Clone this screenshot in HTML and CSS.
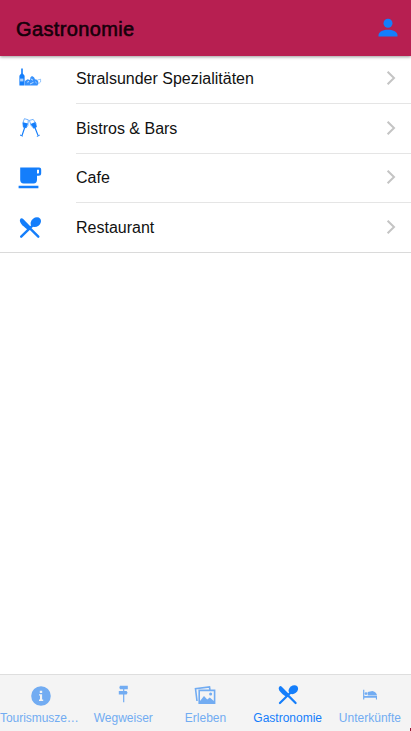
FILE: index.html
```html
<!DOCTYPE html>
<html lang="de">
<head>
<meta charset="utf-8">
<title>Gastronomie</title>
<link rel="stylesheet" href="styles.css">
</head>
<body>
<svg class="defs" width="0" height="0">
  <symbol id="cutlery" viewBox="0 0 24 24">
    <path d="M6.9 11.6 10 14 13 10.9 5.2 3Q3.9 1.8 2.7 2.6C.4 5.1 3.2 8.5 6.9 11.6Z"/>
    <ellipse cx="17.8" cy="6.2" rx="5.6" ry="4.4" transform="rotate(-38 17.8 6.2)"/>
    <path d="M15.5 8.7 3.2 20.7M12 12.4 20.3 20.7" fill="none" stroke="currentColor" stroke-width="2.4" stroke-linecap="round"/>
  </symbol>
  <symbol id="chevron" viewBox="0 0 10 16">
    <path d="M1.6 1.8 8 8 1.6 14.2" fill="none" stroke="#c4c4c4" stroke-width="2"/>
  </symbol>
</svg>
<div class="app">
  <header class="toolbar">
    <h1 class="title">Gastronomie</h1>
    <svg class="person" viewBox="0 0 20 20"><circle cx="10" cy="5.2" r="4.5"/><path d="M.5 18.6V17C.8 13.5 5.6 11.8 10 11.8S19.2 13.5 19.5 17V18.6Z"/></svg>
  </header>
  <main class="content">
    <ul class="list">
      <li class="row">
        <svg class="icon" viewBox="0 0 24 24"><path d="M3.2 2.6H4.8V7.5L6.6 9.7V19.5H1.4V9.7L3.2 7.5Z"/><path d="M7 15 9.5 13.2 12 14 12.5 11.2 14 10 16 11.3 17 13.2 19 13.8 20.5 16 19.5 19.5H7Z" opacity=".85"/><path d="M2.1 12.6H5.4V15.4H2.1Z" fill="#a9cffc"/><path d="M9.2 16.2 11 15.5M13 13 15 14.2M12 18 15.5 16.3M17.3 15.8 18.6 17" fill="none" stroke="#fff" stroke-width=".7"/><path d="M19.5 14 22.6 13.2V16L19.5 18.5" fill="none" stroke="currentColor" stroke-width=".6" opacity=".7"/></svg>
        <div class="item"><span>Stralsunder Spezialitäten</span><svg class="chevron"><use href="#chevron"/></svg></div>
      </li>
      <li class="row">
        <svg class="icon" viewBox="0 0 24 24"><path d="M6.4 1.7 10.3 2.8 9.9 8.5 8.2 10.8 5.4 10.2 4.7 6.4ZM11.4 3.4 15.2 2.4 18 6.5 18.4 10 15.7 11.1 13.3 9Z" fill="#fff" stroke="currentColor" stroke-width=".6"/><path d="M4.9 5.2 10 6.4 8.2 11 5.2 10.3ZM12.6 6.9 17.4 5 18.6 10.1 15.8 11.4Z"/><path d="M6.7 10.5 4 18.6M17 10.8 20 18.4" fill="none" stroke="currentColor" stroke-width="1.2"/><path d="M2 18 4.8 19.2M18.9 19.4 21.7 18.2" fill="none" stroke="currentColor" stroke-width="1"/></svg>
        <div class="item"><span>Bistros &amp; Bars</span><svg class="chevron"><use href="#chevron"/></svg></div>
      </li>
      <li class="row">
        <svg class="icon" viewBox="0 0 24 24"><path fill-rule="evenodd" d="M2.2 1.4H21.2Q23.2 1.4 23.2 3.4V7.3Q23.2 9.8 20.7 9.8H19V13.8Q19 17.4 15.6 17.4H5.7Q2.2 17.4 2.2 13.8ZM19 3.7V7.5H20.3Q21 7.5 21 6.8V3.7ZM.6 19.8H20.4V22.2H.6Z"/></svg>
        <div class="item"><span>Cafe</span><svg class="chevron"><use href="#chevron"/></svg></div>
      </li>
      <li class="row">
        <svg class="icon"><use href="#cutlery"/></svg>
        <div class="item"><span>Restaurant</span><svg class="chevron"><use href="#chevron"/></svg></div>
      </li>
    </ul>
  </main>
  <nav class="tabs">
    <div class="tab"><svg class="tab-icon" viewBox="0 0 22 22"><path fill-rule="evenodd" d="M11 1.2A9.8 9.8 0 1 0 11 20.8A9.8 9.8 0 1 0 11 1.2ZM9.8 5.7H12.2V8H9.8ZM9 9.3H12.1V14.6H13.2V16H9V14.6H10V10.6H9Z"/></svg><span class="label first">Tourismusze…</span></div>
    <div class="tab"><svg class="tab-icon" viewBox="0 0 22 22"><path d="M8 .8H15.8V4.2H8L7.3 2.5ZM6.8 6H14.6L15.6 7.7L14.6 9.4H6.8ZM11.1 4H12.3V17.2H11.1Z"/></svg><span class="label">Wegweiser</span></div>
    <div class="tab"><svg class="tab-icon" viewBox="0 0 22 22"><path d="M3 16 1.5 3.8 15.5 2 16 5" fill="none" stroke="currentColor" stroke-width="1.6"/><path fill-rule="evenodd" d="M4.4 4.6H21.4V19H4.4ZM6 6.2V16L10 11 13.2 14.5 15.8 12.5 19.8 16V6.2Z"/><circle cx="16.6" cy="9" r="1.5"/></svg><span class="label">Erleben</span></div>
    <div class="tab active"><svg class="tab-icon cutlery"><use href="#cutlery"/></svg><span class="label">Gastronomie</span></div>
    <div class="tab"><svg class="tab-icon" viewBox="0 0 22 22"><path d="M4.1 4.8H5.3V11H18V14.4H16.9V12.8H5.3V14.4H4.1ZM8.7 10.4V7L13.5 5.9Q17.7 7 18 10.4Z"/><circle cx="7" cy="8.6" r="1.4"/></svg><span class="label">Unterkünfte</span></div>
  </nav>
  <i class="corner"></i>
</div>
</body>
</html>
```

FILE: styles.css
```css
* { box-sizing: border-box; }
body { margin: 0; font-family: "Liberation Sans", Arial, sans-serif; color: #111; }
svg { display: block; fill: currentColor; flex: none; }
.defs { position: absolute; }
.app { position: relative; height: 731px; overflow: hidden; display: flex; flex-direction: column; background: #fff; }
.toolbar {
  height: 56px; flex: none; display: flex; align-items: center; justify-content: space-between;
  padding: 2px 13px 0 16px; background: #b71f51; box-shadow: 0 1px 3px rgba(0,0,0,.4); z-index: 1;
}
.title { margin: 0; font-size: 20px; line-height: 24px; font-weight: 400; color: #16000a; -webkit-text-stroke: .6px #16000a; letter-spacing: .37px; }
.person { width: 20px; height: 20px; color: #147efb; margin-top: -2px; }
.content { flex: 1; }
.list { list-style: none; margin: 0; padding: 0; border-bottom: 1px solid #dadada; }
.row { display: flex; align-items: center; height: 49.5px; padding-left: 18px; color: #147efb; }
.row:first-child { height: 48px; }
.row:last-child { height: 49px; }
.icon { width: 24px; height: 24px; margin-right: 34px; }
.row:first-child .icon { margin-top: -5px; }
.item {
  flex: 1; height: 100%; display: flex; align-items: center; justify-content: space-between;
  padding-right: 15px; border-bottom: 1px solid #e5e5e5; font-size: 16px; color: #111;
}
.row:first-child .item { padding-bottom: 2px; }
.row:nth-child(2) .item { padding-top: 1px; }
.row:last-child .item { border: 0; }
.chevron { width: 10px; height: 16px; margin-top: -2px; }
.tabs { height: 57px; flex: none; display: grid; grid-template-columns: repeat(5, 1fr); background: #f4f4f4; border-top: 1px solid #dedede; }
.tab { min-width: 0; display: flex; flex-direction: column; align-items: center; padding-top: 10px; color: #72acf2; }
.tab.active { color: #147efb; }
.tab-icon { width: 22px; height: 22px; }
.cutlery { margin-top: -1px; margin-bottom: 1px; }
.label { margin-top: 4px; font-size: 12px; line-height: 15px; white-space: nowrap; }
.first { align-self: flex-start; letter-spacing: -.05px; }
.corner { position: absolute; right: 0; bottom: 0; width: 1px; height: 3px; background: #9c1835; }
```
